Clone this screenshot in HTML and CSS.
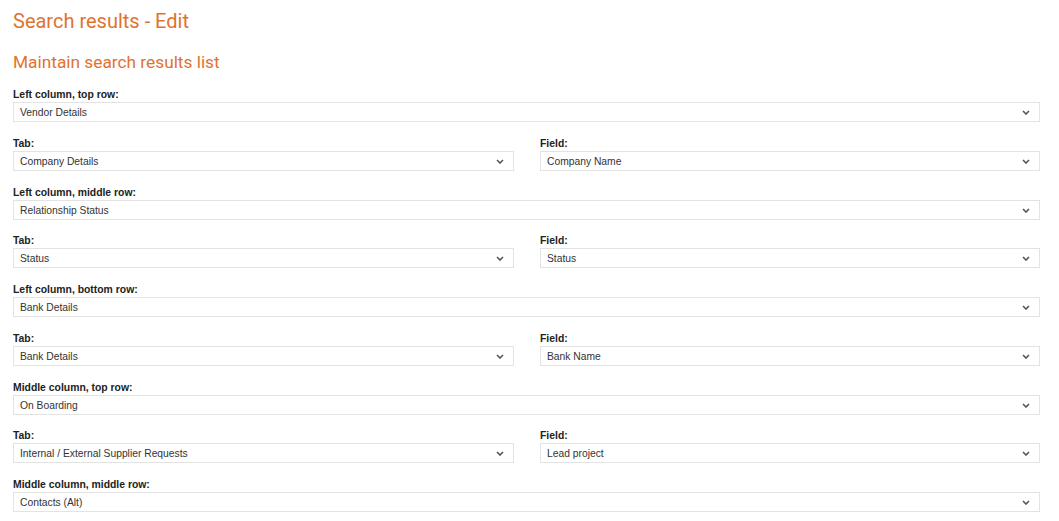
FILE: index.html
```html
<!DOCTYPE html>
<html lang="en">
<head>
    <meta charset="UTF-8">
    <meta name="viewport" content="width=device-width, initial-scale=1.0">
    <title>Search results - Edit</title>
    <link rel="stylesheet" href="styles.css">
</head>
<body>
    <div class="page">
        <h1>Search results - Edit</h1>
        <h2>Maintain search results list</h2>

        <div class="field">
            <label>Left column, top row:</label>
            <div class="select"><span>Vendor Details</span><svg class="chev" width="8" height="5" viewBox="0 0 8 5"><path d="M1 1 L4 4 L7 1" /></svg></div>
        </div>
        <div class="pair">
            <div class="field">
                <label>Tab:</label>
                <div class="select"><span>Company Details</span><svg class="chev" width="8" height="5" viewBox="0 0 8 5"><path d="M1 1 L4 4 L7 1" /></svg></div>
            </div>
            <div class="field">
                <label>Field:</label>
                <div class="select"><span>Company Name</span><svg class="chev" width="8" height="5" viewBox="0 0 8 5"><path d="M1 1 L4 4 L7 1" /></svg></div>
            </div>
        </div>

        <div class="field">
            <label>Left column, middle row:</label>
            <div class="select"><span>Relationship Status</span><svg class="chev" width="8" height="5" viewBox="0 0 8 5"><path d="M1 1 L4 4 L7 1" /></svg></div>
        </div>
        <div class="pair">
            <div class="field">
                <label>Tab:</label>
                <div class="select"><span>Status</span><svg class="chev" width="8" height="5" viewBox="0 0 8 5"><path d="M1 1 L4 4 L7 1" /></svg></div>
            </div>
            <div class="field">
                <label>Field:</label>
                <div class="select"><span>Status</span><svg class="chev" width="8" height="5" viewBox="0 0 8 5"><path d="M1 1 L4 4 L7 1" /></svg></div>
            </div>
        </div>

        <div class="field">
            <label>Left column, bottom row:</label>
            <div class="select"><span>Bank Details</span><svg class="chev" width="8" height="5" viewBox="0 0 8 5"><path d="M1 1 L4 4 L7 1" /></svg></div>
        </div>
        <div class="pair">
            <div class="field">
                <label>Tab:</label>
                <div class="select"><span>Bank Details</span><svg class="chev" width="8" height="5" viewBox="0 0 8 5"><path d="M1 1 L4 4 L7 1" /></svg></div>
            </div>
            <div class="field">
                <label>Field:</label>
                <div class="select"><span>Bank Name</span><svg class="chev" width="8" height="5" viewBox="0 0 8 5"><path d="M1 1 L4 4 L7 1" /></svg></div>
            </div>
        </div>

        <div class="field">
            <label>Middle column, top row:</label>
            <div class="select"><span>On Boarding</span><svg class="chev" width="8" height="5" viewBox="0 0 8 5"><path d="M1 1 L4 4 L7 1" /></svg></div>
        </div>
        <div class="pair">
            <div class="field">
                <label>Tab:</label>
                <div class="select"><span>Internal / External Supplier Requests</span><svg class="chev" width="8" height="5" viewBox="0 0 8 5"><path d="M1 1 L4 4 L7 1" /></svg></div>
            </div>
            <div class="field">
                <label>Field:</label>
                <div class="select"><span>Lead project</span><svg class="chev" width="8" height="5" viewBox="0 0 8 5"><path d="M1 1 L4 4 L7 1" /></svg></div>
            </div>
        </div>

        <div class="field">
            <label>Middle column, middle row:</label>
            <div class="select"><span>Contacts (Alt)</span><svg class="chev" width="8" height="5" viewBox="0 0 8 5"><path d="M1 1 L4 4 L7 1" /></svg></div>
        </div>
    </div>
</body>
</html>
```

FILE: styles.css
```css
body {
    margin: 0;
    background-color: #ffffff;
    font-family: 'Liberation Sans', Arial, sans-serif;
    color: #333333;
}
.page {
    width: 1027px;
    padding: 9px 0 0 13px;
}
h1 {
    font-family: Roboto, 'Liberation Sans', sans-serif;
    font-weight: 400;
    font-size: 20px;
    line-height: 24px;
    color: #e0732f;
    margin: 0 0 19px 0;
}
h2 {
    font-family: Roboto, 'Liberation Sans', sans-serif;
    font-weight: 400;
    font-size: 17.3px;
    line-height: 20px;
    color: #e0732f;
    margin: 0 0 17px 0;
}
.field {
    display: flex;
    flex-direction: column;
    margin-bottom: 15.75px;
}
.field label {
    font-size: 10.4px;
    font-weight: bold;
    line-height: 12px;
    margin-bottom: 1px;
    color: #222222;
}
.select {
    height: 20px;
    box-sizing: border-box;
    border: 1px solid #e3e3e3;
    display: flex;
    align-items: center;
    justify-content: space-between;
    padding: 1px 9px 0 6px;
    font-size: 10.3px;
    color: #333333;
}
.chev path {
    fill: none;
    stroke: #555555;
    stroke-width: 1.6;
}
.pair {
    display: grid;
    grid-template-columns: 501px 500px;
    column-gap: 26px;
}
```
